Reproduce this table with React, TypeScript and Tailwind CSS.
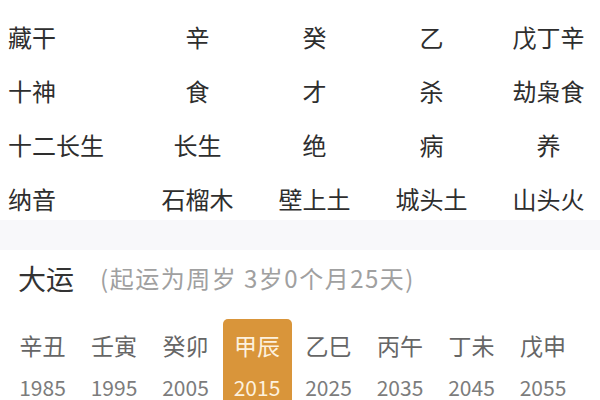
import React from "react";

const rows: { label: string; vals: string[] }[] = [
  { label: "藏干", vals: ["辛", "癸", "乙", "戊丁辛"] },
  { label: "十神", vals: ["食", "才", "杀", "劫枭食"] },
  { label: "十二长生", vals: ["长生", "绝", "病", "养"] },
  { label: "纳音", vals: ["石榴木", "壁上土", "城头土", "山头火"] },
];

const yun = [
  ["辛丑", "1985"],
  ["壬寅", "1995"],
  ["癸卯", "2005"],
  ["甲辰", "2015"],
  ["乙巳", "2025"],
  ["丙午", "2035"],
  ["丁未", "2045"],
  ["戊申", "2055"],
];

export default function App() {
  return (
    <div
      className="w-[600px] h-[400px] overflow-hidden bg-white"
      style={{ fontFamily: '"Noto Sans CJK SC", "Noto Sans", sans-serif' }}
    >
      <div className="h-[220px] overflow-hidden pt-[10px]">
        {rows.map((r) => (
          <div key={r.label} className="flex h-[54px] items-center text-[24px] text-[#2e2e2e]">
            <div className="w-[139px] shrink-0 pl-[8px]">{r.label}</div>
            {r.vals.map((v, i) => (
              <div key={i} className="w-[117px] shrink-0 text-center">
                {v}
              </div>
            ))}
          </div>
        ))}
      </div>
      <div className="h-[30px] bg-[#f8f8fa]" />
      <div className="flex h-[56px] items-center pl-[18px]">
        <span className="text-[28px] text-[#333]">大运</span>
        <span className="ml-[26px] text-[24px] tracking-[1.5px] text-[#a0a0a0]">(起运为周岁 3岁0个月25天)</span>
      </div>
      <div className="mt-[13px] flex gap-[2.5px] pl-[8px]">
        {yun.map(([g, y], i) => {
          const active = i === 3;
          return (
            <div
              key={g}
              className={
                active
                  ? "flex h-[100px] w-[69px] shrink-0 flex-col items-center rounded-[5px] bg-[#d9953a]"
                  : "flex h-[100px] w-[69px] shrink-0 flex-col items-center"
              }
            >
              <div
                className={
                  active
                    ? "flex h-[52px] items-center text-[23px] text-[#fdf1de]"
                    : "flex h-[52px] items-center text-[23px] text-[#666]"
                }
              >
                {g}
              </div>
              <div
                className={
                  active
                    ? "flex h-[34px] items-center text-[21px] text-[#fdf1de]"
                    : "flex h-[34px] items-center text-[21px] text-[#7c7c7c]"
                }
              >
                {y}
              </div>
            </div>
          );
        })}
      </div>
    </div>
  );
}
